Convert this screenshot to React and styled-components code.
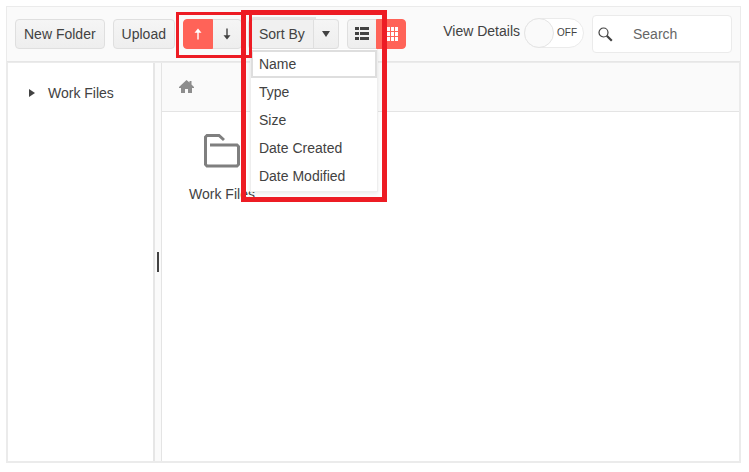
import React from "react";
import styled, { createGlobalStyle, css } from "styled-components";

const GlobalStyle = createGlobalStyle`
  *, *::before, *::after { box-sizing: border-box; }
  body {
    margin: 0;
    background: #fff;
    color: #424242;
    font: 14px/20px "Liberation Sans", Arial, sans-serif;
  }
  button, input { font: inherit; color: inherit; }
  svg { display: block; }
`;

const Manager = styled.main`
  display: flex;
  flex-direction: column;
  min-height: calc(100vh - 15px);
  margin: 6px 8px 9px 6px;
  border: 1px solid #ebebeb;
`;

const Toolbar = styled.header`
  display: flex;
  align-items: center;
  gap: 8px;
  padding: 8px;
  background: #fafafa;
  border-bottom: 1px solid #e6e6e6;
`;

const Button = styled.button`
  display: flex;
  align-items: center;
  justify-content: center;
  height: 30px;
  padding: 0 8px;
  white-space: nowrap;
  border: 1px solid #dfdfdf;
  border-radius: 4px;
  background: linear-gradient(#f5f5f5, #eeeeee);
`;

const Group = styled.div`
  position: relative;
  display: flex;
`;

const IconButton = styled(Button)`
  width: 30px;
  padding: 0;
  &:first-child { border-radius: 4px 0 0 4px; }
  &:nth-child(2) { margin-left: -1px; border-radius: 0 4px 4px 0; }
  ${(p) =>
    p.$selected &&
    css`
      position: relative;
      color: #fff;
      background: #ff6358;
      border-color: #ff6358;
    `}
`;

const SortButton = styled(Button)`
  border-radius: 4px 0 0 4px;
  background: #f0f0f0;
  box-shadow: 0 0 0 2px #e3e3e3;
`;

const DropButton = styled(Button)`
  width: 25px;
  padding: 0;
  border-left: 0;
  border-radius: 0 4px 4px 0;
`;

const Callout = styled.div`
  position: absolute;
  z-index: ${(p) => (p.$large ? 4 : 3)};
  inset: ${(p) => (p.$large ? "-9px -48px -153px -9px" : "-7px -10px -9px -7px")};
  border: ${(p) => (p.$large ? 5 : 3)}px solid #ed1c24;
  pointer-events: none;
`;

const Menu = styled.ul`
  position: absolute;
  z-index: 2;
  top: 30px;
  left: 0;
  width: 128px;
  margin: 0;
  padding: 1px 0;
  list-style: none;
  background: #fff;
  border: 1px solid #eeeeee;
  border-top: 0;
  box-shadow: 0 2px 4px rgba(0, 0, 0, 0.08);
`;

const MenuItem = styled.button`
  display: block;
  width: 100%;
  height: 28px;
  padding: 0 8px;
  text-align: left;
  border: 0;
  background: #fff;
  box-shadow: ${(p) => (p.$focused ? "inset 0 0 0 2px #dedede" : "none")};
`;

const Details = styled.label`
  display: flex;
  align-items: center;
  gap: 4px;
  height: 38px;
  margin-left: auto;
  padding-bottom: 2px;
  white-space: nowrap;
`;

const DetailsText = styled.span`
  padding-bottom: 4px;
`;

const Switch = styled.span`
  position: relative;
  display: flex;
  align-items: center;
  justify-content: flex-end;
  width: 60px;
  height: 30px;
  padding-right: 6px;
  font-size: 10px;
  background: #fff;
  border: 1px solid #ebebeb;
  border-radius: 15px;
`;

const SwitchInput = styled.input`
  appearance: none;
  position: absolute;
  top: -1px;
  left: -1px;
  width: 30px;
  height: 30px;
  margin: 0;
  background: #fafafa;
  border: 1px solid #e4e4e4;
  border-radius: 50%;
`;

const SearchBox = styled.label`
  display: flex;
  align-items: center;
  gap: 20px;
  width: 140px;
  height: 38px;
  padding: 0 5px;
  background: #fff;
  border: 1px solid #ebebeb;
  border-radius: 4px;
`;

const SearchInput = styled.input`
  flex: 1;
  min-width: 0;
  padding: 0;
  border: 0;
  outline: 0;
  background: transparent;
  &::placeholder { color: #666; opacity: 1; }
`;

const Content = styled.div`
  flex: 1;
  display: flex;
  border: 1px solid #ebebeb;
`;

const Sidebar = styled.nav`
  width: 145px;
  padding: 20px;
`;

const TreeItem = styled.button`
  display: flex;
  align-items: center;
  gap: 13px;
  padding: 0 0 0 1px;
  border: 0;
  background: none;
`;

const Splitter = styled.div`
  display: flex;
  align-items: center;
  justify-content: center;
  width: 9px;
  background: #fafafa;
  border-left: 2px solid #e6e6e6;
  border-right: 1px solid #e4e4e4;
`;

const Handle = styled.span`
  width: 2px;
  height: 20px;
  background: #424242;
`;

const Pane = styled.section`
  flex: 1;
`;

const Breadcrumb = styled.nav`
  display: flex;
  align-items: center;
  height: 49px;
  padding: 0 17px 1px;
  background: #fafafa;
  border-bottom: 1px solid #e4e4e4;
`;

const HomeLink = styled.a`
  color: #8d8d8d;
`;

const Files = styled.div`
  display: flex;
  padding: 22px 0;
`;

const File = styled.button`
  display: flex;
  flex-direction: column;
  align-items: center;
  gap: 16px;
  width: 120px;
  padding: 0;
  border: 0;
  background: none;
`;

const sortFields = ["Name", "Type", "Size", "Date Created", "Date Modified"];

const Arrow = ({ down }) => (
  <svg width="10" height="12" viewBox="0 0 10 12" aria-hidden="true">
    <g transform={down ? "rotate(180 5 6)" : undefined}>
      <path d="M5 11.500V2" stroke="currentColor" strokeWidth="1.4" />
      <path d="M5 0.5L8.500 4.8H1.500Z" fill="currentColor" />
    </g>
  </svg>
);

const ListIcon = () => (
  <svg width="14" height="14" viewBox="0 0 14 14" fill="currentColor" aria-hidden="true">
    <path d="M0 0h4v3H0zM5 0h9v3H5zM0 5h4v3H0zM5 5h9v3H5zM0 10h4v3H0zM5 10h9v3H5z" />
  </svg>
);

const GridIcon = () => (
  <svg width="14" height="14" viewBox="0 0 14 14" fill="currentColor" aria-hidden="true">
    <path d="M2 0h4v4H2zM7 0h3v4H7zM11 0h3v4H11zM2 5h4v4H2zM7 5h3v4H7zM11 5h3v4H11zM2 10h4v4H2zM7 10h3v4H7zM11 10h3v4H11z" />
  </svg>
);

const DownIcon = () => (
  <svg width="8" height="6" viewBox="0 0 8 6" fill="currentColor" aria-hidden="true">
    <path d="M0 0h8L4 6z" />
  </svg>
);

const ExpandIcon = () => (
  <svg width="6" height="8" viewBox="0 0 6 8" fill="currentColor" aria-hidden="true">
    <path d="M0 0v8l6-4z" />
  </svg>
);

const SearchIcon = () => (
  <svg width="15" height="15" viewBox="0 0 15 15" fill="none" stroke="#424242" aria-hidden="true">
    <circle cx="5.5" cy="5.5" r="4.5" strokeWidth="1.2" />
    <path d="M8.8 8.8L13.8 13.8" strokeWidth="2.2" />
  </svg>
);

const HomeIcon = () => (
  <svg width="15" height="13" viewBox="0 0 15 13" fill="currentColor" aria-hidden="true">
    <path d="M7.500 0L10.500 2.6V1H12.500V4.400L15 7V8H13V13H9V9H6V13H2V8H0V7z" />
  </svg>
);

const FolderIcon = () => (
  <svg width="36" height="34" viewBox="0 0 36 34" fill="none" stroke="#7f7f7f" strokeWidth="3" aria-hidden="true">
    <path d="M20 6L15 1.5H3L1.5 3V30.500L3 32H33L34.500 30.500V12.500L33 11H6" />
  </svg>
);

export default function App() {
  return (
    <>
      <GlobalStyle />
      <Manager>
        <Toolbar>
          <Button type="button">New Folder</Button>
          <Button type="button">Upload</Button>
          <Group role="group" aria-label="Sort direction">
            <IconButton type="button" $selected aria-label="Ascending" aria-pressed="true"><Arrow /></IconButton>
            <IconButton type="button" aria-label="Descending" aria-pressed="false"><Arrow down /></IconButton>
            <Callout />
          </Group>
          <Group>
            <SortButton type="button">Sort By</SortButton>
            <DropButton type="button" aria-label="Sort options" aria-expanded="true"><DownIcon /></DropButton>
            <Menu>
              {sortFields.map((field, i) => (
                <li key={field}>
                  <MenuItem type="button" $focused={i === 0}>{field}</MenuItem>
                </li>
              ))}
            </Menu>
            <Callout $large />
          </Group>
          <Group role="group" aria-label="View">
            <IconButton type="button" aria-label="List view" aria-pressed="false"><ListIcon /></IconButton>
            <IconButton type="button" $selected aria-label="Grid view" aria-pressed="true"><GridIcon /></IconButton>
          </Group>
          <Details>
            <DetailsText>View Details</DetailsText>
            <Switch>
              <SwitchInput type="checkbox" role="switch" />
              OFF
            </Switch>
          </Details>
          <SearchBox>
            <SearchIcon />
            <SearchInput type="text" placeholder="Search" aria-label="Search" />
          </SearchBox>
        </Toolbar>
        <Content>
          <Sidebar aria-label="Folders">
            <TreeItem type="button"><ExpandIcon />Work Files</TreeItem>
          </Sidebar>
          <Splitter role="separator" aria-orientation="vertical"><Handle /></Splitter>
          <Pane>
            <Breadcrumb aria-label="Path">
              <HomeLink href="#" aria-label="Home"><HomeIcon /></HomeLink>
            </Breadcrumb>
            <Files>
              <File type="button"><FolderIcon />Work Files</File>
            </Files>
          </Pane>
        </Content>
      </Manager>
    </>
  );
}
